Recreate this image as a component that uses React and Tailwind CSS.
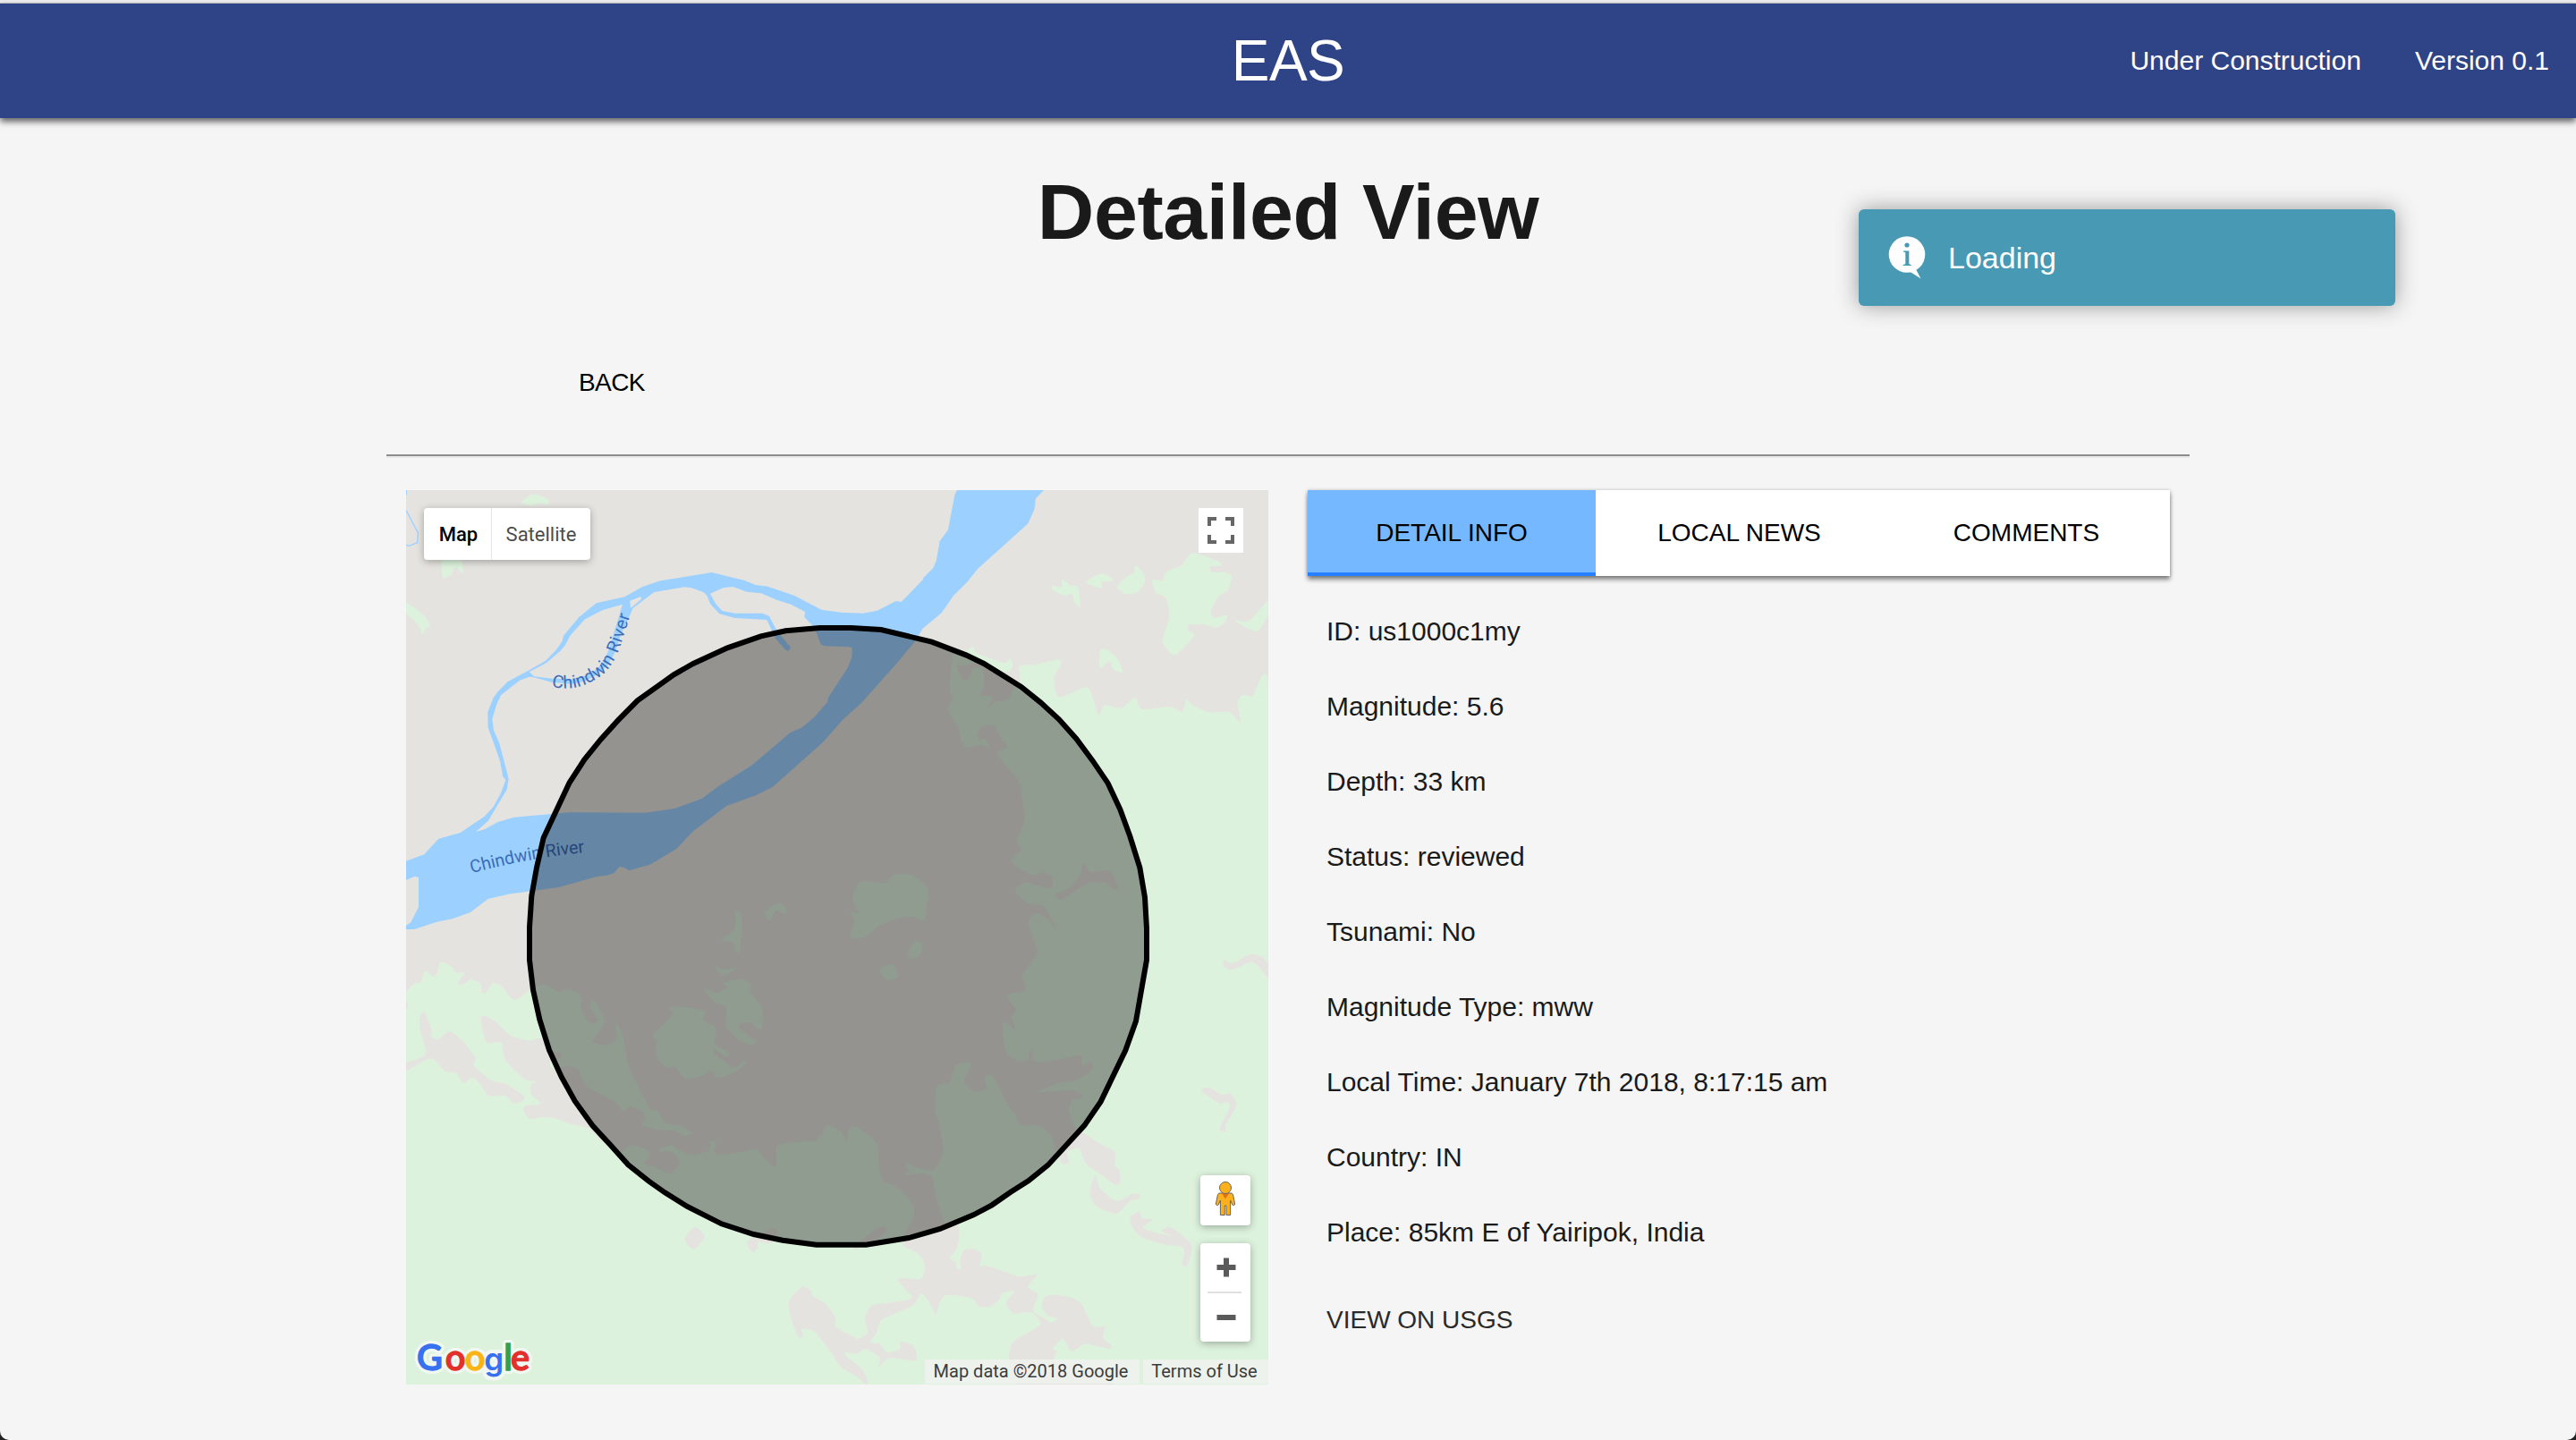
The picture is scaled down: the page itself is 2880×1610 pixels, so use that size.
const LAND = '#e5e3df';
const PARK = '#ddf2dd';
const WATER = '#9cd1ff';

// Closed smooth curve through a flat "x,y x,y ..." point list.
function smooth(list) {
  const p = list.trim().split(/\s+/).map((s) => s.split(',').map(Number));
  const n = p.length;
  const k = 0.13;
  let d = `M${p[0][0]},${p[0][1]}`;
  for (let i = 0; i < n; i++) {
    const a = p[(i + n - 1) % n];
    const b = p[i];
    const c = p[(i + 1) % n];
    const e = p[(i + 2) % n];
    d += `C${b[0] + (c[0] - a[0]) * k},${b[1] + (c[1] - a[1]) * k} ${c[0] - (e[0] - b[0]) * k},${c[1] - (e[1] - b[1]) * k} ${c[0]},${c[1]}`;
  }
  return d + 'Z';
}

function Shapes({ items, fill, move }) {
  return (
    <g fill={fill} transform={move}>
      {items.map((s, i) => (
        <path key={i} d={smooth(s)} />
      ))}
    </g>
  );
}

const parksNorthWest = [
  '430,62 465,38 505,48 522,62 518,72 490,68 462,75 435,70',
  '165,250 165,317 193,306 200,290 212,284 230,303 234,300 222,250',
  '20,392 42,402 75,422 105,447 123,478 110,485 97,507 80,473 42,437 20,420',
  '1145,1445 1155,1433 1167,1450 1169,1490 1163,1560 1155,1577 1142,1565 1140,1540 1110,1538 1102,1530 1140,1502 1148,1475',
  '1245,1442 1290,1407 1315,1425 1315,1445 1282,1435 1262,1468',
];

const parksEast = [
  '0,2183 50,2172 68,2185 80,2210 85,2175 105,2158 135,2175 180,2215 190,2300 205,2343 245,2360 300,2415 305,2465 283,2500 268,2555 320,2585 342,2625 328,2670 260,2666 256,2680 298,2728 290,2738 220,2750 165,2758 141,2800 150,2850 110,2873 60,2845 40,2850 45,2890 75,2915 115,2920 140,2905 190,2933 188,2964 225,2935 312,2943 307,2900 285,2885 260,2881 258,2905 215,2916 190,2887 160,2882 180,2850 200,2805 300,2760 330,2719 360,2755 380,2790 390,2755 415,2724 500,2735 520,2760 560,2762 595,2735 600,2718 640,2712 615,2750 640,2785 700,2782 730,2818 710,2838 630,2895 655,3024 970,3024 900,2970 780,2950 785,2912 770,2905 805,2870 835,2912 880,2888 960,2903 965,2890 940,2868 945,2830 905,2828 873,2762 850,2740 810,2726 750,2726 735,2758 750,2790 785,2803 765,2815 740,2800 705,2775 722,2722 688,2696 718,2654 660,2662 600,2642 545,2624 527,2630 532,2585 500,2568 472,2575 460,2612 463,2635 450,2635 445,2612 426,2600 448,2570 458,2530 452,2490 410,2480 380,2400 370,2340 360,2322 330,2315 274,2322 285,2305 275,2278 310,2295 350,2305 375,2300 403,2245 390,2150 375,2105 382,2025 425,2010 445,1955 495,1942 492,1965 475,2010 510,2042 548,2030 542,1995 570,1990 625,2095 645,2115 665,2155 720,2155 765,2190 800,2280 825,2278 818,2245 835,2235 862,2235 880,2280 920,2310 980,2353 998,2345 995,2305 978,2290 980,2245 920,2210 880,2183 850,2170 825,2110 835,2070 870,2062 840,2038 725,2042 790,2012 850,2003 905,1965 895,1942 870,1955 865,1920 800,1932 715,1942 702,1905 690,1910 690,1935 650,1937 612,1902 605,1810 645,1833 634,1790 648,1767 618,1725 630,1712 680,1700 670,1650 718,1580 712,1545 690,1480 710,1445 750,1460 785,1500 740,1420 690,1410 645,1370 680,1340 760,1360 770,1325 740,1305 700,1315 632,1270 665,1230 650,1200 677,1125 665,1040 650,990 585,910 620,885 600,860 575,815 540,815 518,840 525,862 545,860 560,888 530,878 480,888 465,865 455,820 420,765 435,720 425,690 435,580 445,565 485,560 505,545 515,570 610,603 625,588 637,605 625,632 575,628 520,600 480,612 450,610 455,635 475,663 490,650 505,622 530,620 540,645 540,688 525,712 568,718 550,762 575,735 615,730 635,700 662,660 660,615 720,608 790,592 798,610 775,655 785,710 805,717 880,685 900,705 925,777 945,745 1000,755 1048,720 1070,758 1165,750 1205,768 1220,725 1235,742 1290,768 1365,770 1400,803 1392,740 1405,712 1440,715 1500,700 1560,1800 1500,3100 -10,3100 -5,2600',
  '770,345 800,350 803,322 830,345 855,350 863,415 845,400 835,372 810,378 770,358',
  '883,333 930,305 965,315 970,328 935,333 933,353',
  '987,350 1015,318 1045,300 1045,282 1058,282 1082,320 1060,362 1020,373',
  '1105,325 1140,328 1150,300 1205,275 1240,235 1330,265 1332,278 1300,280 1305,300 1350,300 1372,315 1358,360 1330,378 1302,425 1312,452 1355,443 1350,465 1320,485 1280,475 1230,475 1225,495 1245,512 1190,572 1165,570 1140,525 1162,450 1150,385 1118,368',
  '1380,460 1430,462 1494,393 1510,400 1494,443 1460,495 1425,488',
  '930,565 945,556 985,585 1005,635 975,625 962,598 930,620',
  '125,1338 210,1342 235,1315 295,1315 350,1355 350,1400 340,1467 300,1455 240,1465 180,1490 155,1515 110,1530 92,1515 105,1470 93,1440 120,1440 100,1395',
  '285,1575 310,1537 333,1545 328,1580 295,1597',
  '190,1635 220,1615 240,1620 253,1655 215,1667',
];

const clearingsEast = [
  '780,1380 830,1355 865,1310 872,1275 900,1305 960,1300 990,1355 975,1362 945,1340 885,1345 800,1397',
  '-70,2695 -40,2710 -35,2725 10,2755 42,2800 42,2828 75,2850 115,2873 120,2915 75,2915 85,2935 130,2970 150,3010 145,3024 110,2995 60,2965 20,2905 0,2880 -30,2845 -70,2838 -68,2862 -85,2860 -115,2755',
  '1345,1600 1375,1612 1430,1582 1475,1590 1510,1640 1510,1680 1445,1608 1375,1632 1345,1622',
  '1275,2030 1300,2030 1340,2052 1365,2048 1388,2085 1350,2155 1355,2175 1332,2165 1365,2095 1355,2075 1330,2080 1272,2042',
  '897,2365 915,2322 930,2365 985,2408 1040,2384 1064,2388 1055,2402 1030,2408 985,2450 920,2427 897,2390',
  '1032,2460 1062,2446 1072,2467 1105,2470 1075,2500 1130,2518 1172,2525 1135,2510 1165,2496 1225,2540 1238,2568 1222,2625 1205,2620 1210,2565 1150,2555 1070,2530 1035,2490',
  '105,2565 150,2522 195,2495 213,2505 190,2530 120,2568',
];

const parksSouthWest = [
  '20,220 42,205 70,180 90,175 107,137 130,155 145,148 158,108 195,123 210,143 237,143 215,178 230,183 262,165 293,180 295,205 308,212 335,178 365,190 385,218 405,234 430,222 470,195 510,182 555,208 580,198 615,208 632,230 628,250 645,295 665,312 685,303 657,250 675,238 705,295 705,315 672,365 672,378 715,385 748,362 745,320 752,318 770,355 790,460 820,520 860,598 885,605 912,647 960,655 1003,680 990,690 940,722 995,752 1060,738 1062,712 1083,712 1075,745 1110,752 1180,742 1220,735 1240,760 1275,795 1285,780 1285,725 1340,712 1415,705 1430,690 1490,672 1450,900 1448,1540 20,1580',
  '1080,118 1105,132 1150,127 1110,152 1085,135',
  '1040,195 1085,210 1120,190 1105,178 1160,165 1198,180 1200,210 1235,260 1237,325 1220,330 1195,308 1155,325 1215,372 1200,385 1155,365 1115,320 1115,258 1080,245',
  '870,350 935,285 925,262 970,257 1045,272 1040,300 1082,330 1078,380 1125,410 1115,425 1080,400 1078,415 1140,460 1175,437 1180,450 1145,475 1088,495 1065,470 1040,485 980,498 945,460 912,460 880,420 882,370',
];

const clearingsSouthWest = [
  '295,287 340,305 390,352 450,370 500,362 520,400 562,415 555,432 525,440 532,462 590,457 620,470 635,505 660,532 740,575 770,607 795,592 835,608 843,630 835,655 880,668 940,672 975,690 1010,680 1060,700 1050,738 995,752 940,722 895,732 892,744 915,740 940,750 960,780 925,817 880,795 840,782 858,760 850,738 800,720 760,745 700,710 655,665 600,652 545,632 500,628 455,632 433,598 450,587 490,585 490,575 460,550 460,520 478,507 440,500 375,435 362,378 315,378 300,340',
  '90,285 105,278 128,335 125,355 150,367 185,340 230,370 275,430 270,455 330,505 375,515 440,560 405,582 375,555 320,555 290,515 265,495 235,512 210,480 175,475 125,430 42,473 20,480 20,450 42,445 107,415 88,330',
  '30,240 48,245 47,262 30,280',
  '1010,995 1043,1027 1008,1070 976,1037',
  '1190,1040 1270,1000 1290,1015 1262,1050 1225,1045 1220,1065 1208,1080 1190,1065',
];

const river =
  'M42,1268 L103,1246 150,1194 224,1173 305,1118 335,1086 360,1040 376,996 366,983 358,935 317,820 316,768 335,720 348,702 382,667 455,628 510,596 545,560 566,530 570,512 622,450 680,403 775,382 835,348 895,328 1067,300 1175,326 1215,342 1255,347 1345,378 1435,425 1500,434 1575,437 1622,428 1685,396 1703,399 1775,325 1777,318 1810,285 1820,262 1832,195 1860,157 1882,40 1890,24 2181,24 2154,52 2149,90 2127,137 1960,287 1924,332 1878,378 1838,436 1775,488 1750,530 1690,602 1570,737 1508,793 1440,870 1272,1019 1215,1048 1117,1083 1005,1168 948,1228 860,1280 790,1300 775,1291 758,1287 740,1308 715,1316 683,1320 555,1356 385,1379 317,1395 258,1440 200,1461 145,1472 70,1497 42,1497 42,1484 58,1474 84,1422 84,1322 70,1320 42,1332Z' +
  'M276,1169 L305,1162 350,1137 405,1121 590,1105 845,1106 943,1092 1035,1058 1090,1017 1200,948 1330,838 1368,821 1410,787 1455,735 1458,720 1523,620 1537,585 1538,555 1530,550 1445,547 1433,541 1418,500 1405,478 1378,450 1380,432 1332,407 1285,392 1233,370 1185,365 1138,348 1105,352 1062,371 1080,404 1102,429 1145,437 1238,437 1260,447 1285,495 1332,551 1325,563 1315,560 1282,523 1252,459 1145,453 1093,439 1062,405 1052,379 1040,367 1000,352 975,349 875,366 835,395 803,420 785,460 762,510 742,570 715,615 680,645 640,665 600,674 530,668 470,652 455,650 423,662 360,712 345,745 331,792 336,830 354,870 370,930 386,992 380,1028 317,1134Z' +
  'M455,634 L472,649 530,656 600,658 660,642 700,605 722,560 740,500 768,407 702,426 642,457 592,512 575,545 558,565 512,604Z' +
  'M793,395 L829,381 831,390 795,420Z';

const ring =
  '1430,486 1535,486 1635,492 1805,533 1920,577 1980,606 2040,643 2105,684 2170,736 2232,793 2290,858 2345,932 2396,1007 2437,1095 2470,1185 2503,1290 2520,1390 2526,1495 2526,1600 2490,1805 2455,1903 2372,2075 2317,2155 2195,2288 2130,2340 2070,2378 2007,2422 1945,2455 1833,2502 1733,2531 1585,2555 1418,2555 1305,2540 1208,2520 1100,2485 985,2427 910,2380 855,2341 787,2287 725,2218 667,2155 608,2073 563,1992 522,1902 490,1800 468,1700 456,1600 456,1490 463,1385 480,1290 503,1190 590,1005 640,928 695,860 752,797 818,730 940,643 1005,606 1120,553 1232,514 1315,496';

// Letter, x, colour, font, size.
const logo = [
  ['G', 78, '#3871f0', 'Lato, sans-serif', 119],
  ['o', 173, '#e2312d', 'Lato, sans-serif', 119],
  ['o', 239, '#fbb414', 'Lato, sans-serif', 119],
  ['g', 304, '#3871f0', 'Inter, sans-serif', 105],
  ['l', 370, '#35a047', 'Lato, sans-serif', 119],
  ['e', 393, '#e2312d', 'Lato, sans-serif', 119],
];

function MapCanvas() {
  return (
    <svg className="block h-full w-full" viewBox="42 24 2892 3000">
      <rect x="42" y="24" width="2892" height="3000" fill={LAND} />
      <Shapes items={parksNorthWest} fill={PARK} />
      <Shapes items={parksSouthWest} fill={PARK} move="translate(0 1500)" />
      <Shapes items={clearingsSouthWest} fill={LAND} move="translate(0 1500)" />
      <Shapes items={parksEast} fill={PARK} move="translate(1440 0)" />
      <Shapes items={clearingsEast} fill={LAND} move="translate(1440 0)" />
      <path d={river} fill={WATER} fillRule="evenodd" />
      <path d="M42,92 L82,167 80,200 52,211 42,208 M43,24 V40" fill="none" stroke={WATER} strokeWidth="4" />
      <defs>
        <path id="bend" d="M530,682 C600,702 665,674 709,636 C744,600 758,555 771,515 L812,385" />
        <path id="reach" d="M262,1309 Q450,1258 650,1238" />
      </defs>
      <g fill="#3a6cba" fontFamily="Roboto, sans-serif" fontSize="59">
        <text textLength="404" lengthAdjust="spacing">
          <textPath href="#bend">Chindwin River</textPath>
        </text>
        <text textLength="386" lengthAdjust="spacing">
          <textPath href="#reach">Chindwin River</textPath>
        </text>
      </g>
      <polygon points={ring} fill="#000" fillOpacity="0.353" stroke="#000" strokeWidth="18" />
      <g fontWeight="600" strokeLinejoin="round">
        {logo.map(([ch, x, , font, size], i) => (
          <text key={'h' + i} x={x} y="2976" fontFamily={font} fontSize={size} fill="#f1f8f1" stroke="#f1f8f1" strokeWidth="24">
            {ch}
          </text>
        ))}
        {logo.map(([ch, x, color, font, size], i) => (
          <text key={i} x={x} y="2976" fontFamily={font} fontSize={size} fill={color} stroke={color} strokeWidth={ch === 'g' ? 0 : 4}>
            {ch}
          </text>
        ))}
      </g>
    </svg>
  );
}

function Pegman() {
  return (
    <svg className="h-[40px] w-[24px]" viewBox="0 0 24 40" fill="#fbb01c" stroke="#666" strokeWidth="1">
      <path d="M6 14 L18 14 C20 14 20.5 15 20.8 17 L22.6 26 C22.8 27.5 20.5 28.3 19.8 27 L17.6 22 L17.6 38.5 H13 V28 H11.2 V38.5 H6.4 V22 L4.2 27 C3.5 28.3 1.2 27.5 1.4 26 L3.2 17 C3.5 15 4 14 6 14Z" />
      <path d="M8 14 H16 L12 20.5Z" fill="#e0701a" stroke="none" />
      <circle cx="12" cy="8" r="6.5" />
    </svg>
  );
}

function MapPanel() {
  return (
    <div className="relative h-[1000px] w-[964px] overflow-hidden font-[Roboto,sans-serif]">
      <MapCanvas />
      <div className="absolute left-[20px] top-[20px] flex h-[58px] rounded-[4px] bg-white text-[22px] shadow-[0_2px_8px_rgba(0,0,0,0.3)]">
        <div className="flex w-[76px] items-center justify-center border-r border-[#e6e6e6] pl-[2px] font-medium text-black">Map</div>
        <div className="flex w-[110px] items-center justify-center text-[#4c4c4c]">Satellite</div>
      </div>
      <div className="absolute right-[28px] top-[20px] flex h-[50px] w-[50px] items-center justify-center bg-white">
        <svg className="h-[30px] w-[30px]" viewBox="0 0 30 30" fill="none" stroke="#666" strokeWidth="4">
          <path d="M2 10 V2 H10 M20 2 H28 V10 M28 20 V28 H20 M10 28 H2 V20" />
        </svg>
      </div>
      <div className="absolute bottom-[48px] right-[20px] flex flex-col gap-[20px]">
        <div className="flex h-[56px] w-[56px] justify-center rounded-[4px] bg-white pt-[6px] shadow-[0_2px_8px_rgba(0,0,0,0.3)]">
          <Pegman />
        </div>
        <div className="h-[110px] w-[56px] rounded-[4px] bg-white shadow-[0_2px_8px_rgba(0,0,0,0.3)]">
          <svg className="h-full w-full" viewBox="0 0 56 110">
            <path d="M18.5 27 H39.5 M29 16.5 V37.5 M18.5 83 H39.5" stroke="#5a5a5a" strokeWidth="6" />
            <path d="M8 55 H46" stroke="#e0e0e0" strokeWidth="2" />
          </svg>
        </div>
      </div>
      <div className="absolute bottom-[1px] right-0 flex h-[27px] gap-[4px] whitespace-nowrap text-[20px] leading-[27px] text-[#3c3c3c]">
        <div className="w-[240px] bg-[#f0f2ef]/85 pr-[3px] text-center">Map data ©2018 Google</div>
        <div className="w-[140px] bg-[#f0f2ef]/85 pr-[3px] text-center">Terms of Use</div>
      </div>
    </div>
  );
}

const details = [
  'ID: us1000c1my',
  'Magnitude: 5.6',
  'Depth: 33 km',
  'Status: reviewed',
  'Tsunami: No',
  'Magnitude Type: mww',
  'Local Time: January 7th 2018, 8:17:15 am',
  'Country: IN',
  'Place: 85km E of Yairipok, India',
];

function DetailPanel() {
  return (
    <div className="w-[964px]">
      <div className="grid h-[96px] grid-cols-[322px_321px_321px] bg-white text-[28px] text-black shadow-[0_4px_5px_rgba(0,0,0,0.45),0_0_4px_rgba(0,0,0,0.2)]">
        <div className="flex items-center justify-center border-b-4 border-[#2780ff] bg-[#75b8ff] pt-[4px]">DETAIL INFO</div>
        <div className="flex items-center justify-center">LOCAL NEWS</div>
        <div className="flex items-center justify-center">COMMENTS</div>
      </div>
      <div className="px-[21px] pt-[20px] text-[30px] text-[#1a1a1a]">
        {details.map((line) => (
          <p key={line} className="h-[84px] leading-[84px]">
            {line}
          </p>
        ))}
        <p className="mt-[14px] text-[28px] leading-[84px] text-[#2a2a2a]">VIEW ON USGS</p>
      </div>
    </div>
  );
}

function Toast() {
  return (
    <div className="absolute left-[2078px] top-[234px] flex h-[108px] w-[600px] items-center rounded-[6px] bg-[#4799b4] pl-[32px] text-[34px] text-white shadow-[0_0_24px_#999]">
      <svg className="h-[48px] w-[44px]" viewBox="0 0 44 48">
        <circle cx="22" cy="20.5" r="20.3" fill="#fdfdfd" />
        <path d="M24 39 L37.5 47.500 L31.500 36Z" fill="#fdfdfd" />
        <g fill="#4799b4">
          <circle cx="22" cy="10" r="2.6" />
          <path d="M18 16.500 H24.300 V31.300 L26.800 32 V33 H17.600 V32 L20.300 31.300 V18.300 L18 17.600Z" />
        </g>
      </svg>
      <span className="ml-[24px]">Loading</span>
    </div>
  );
}

export default function App() {
  return (
    <div className="h-[1610px] w-[2880px] overflow-hidden bg-[#222]">
      <div className="relative h-full overflow-hidden rounded-b-[10px] bg-[#f5f5f5] font-['Liberation_Sans',Arial,sans-serif]">
        <div className="h-[4px] border-b border-[#c0c0c0] bg-[#ececec]" />
        <header className="grid h-[128px] grid-cols-3 items-center bg-[#2e4486] px-[30px] text-white shadow-[0_4px_7px_rgba(0,0,0,0.6)]">
          <div />
          <div className="text-center text-[64px] leading-[80px] tracking-[-0.5px]">EAS</div>
          <div className="mb-[2px] flex justify-end gap-[60px] text-[30px]">
            <span>Under Construction</span>
            <span>Version 0.1</span>
          </div>
        </header>
        <h1 className="mt-[55px] text-center text-[88px] font-bold leading-[100px] tracking-[-0.4px] text-[#1a1a1a]">Detailed View</h1>
        <main className="mx-auto w-[2016px]">
          <div className="mt-[99px] pl-[215px] text-[28px] leading-[84px] tracking-[-0.6px] text-black">BACK</div>
          <div className="mt-[38px] h-[4px] border-b-2 border-t-2 border-b-[#e9e9e9] border-t-[#8c8c8c]" />
          <div className="mt-[36px] flex justify-between px-[22px]">
            <MapPanel />
            <DetailPanel />
          </div>
        </main>
        <Toast />
      </div>
    </div>
  );
}
